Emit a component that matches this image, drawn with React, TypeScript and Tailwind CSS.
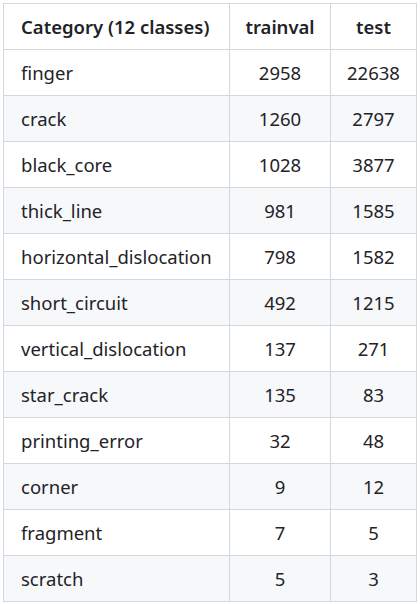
import React from "react";

const rows: [string, string, string][] = [
  ["finger", "2958", "22638"],
  ["crack", "1260", "2797"],
  ["black_core", "1028", "3877"],
  ["thick_line", "981", "1585"],
  ["horizontal_dislocation", "798", "1582"],
  ["short_circuit", "492", "1215"],
  ["vertical_dislocation", "137", "271"],
  ["star_crack", "135", "83"],
  ["printing_error", "32", "48"],
  ["corner", "9", "12"],
  ["fragment", "7", "5"],
  ["scratch", "5", "3"],
];

export default function App() {
  return (
    <div className="w-[420px] h-[604px] bg-white pt-[3px] pl-[3px]" style={{ fontFamily: '"Noto Sans", sans-serif' }}>
      <table className="border-collapse text-[18.5px] text-[#1f2328]">
        <colgroup>
          <col className="w-[226px]" />
          <col className="w-[101px]" />
          <col className="w-[86px]" />
        </colgroup>
        <thead>
          <tr className="bg-white h-[46px]">
            <th className="border border-[#d1d9e0] pl-[17px] pr-[4px] text-left font-semibold">Category (12 classes)</th>
            <th className="border border-[#d1d9e0] px-[4px] text-center font-semibold">trainval</th>
            <th className="border border-[#d1d9e0] px-[4px] text-center font-semibold">test</th>
          </tr>
        </thead>
        <tbody>
          {rows.map((r, i) => (
            <tr key={r[0]} className={`h-[46px] ${i % 2 === 1 ? "bg-[#f6f8fa]" : "bg-white"}`}>
              <td className="border border-[#d1d9e0] pl-[17px] pr-[4px] text-left">{r[0]}</td>
              <td className="border border-[#d1d9e0] px-[4px] text-center">{r[1]}</td>
              <td className="border border-[#d1d9e0] px-[4px] text-center">{r[2]}</td>
            </tr>
          ))}
        </tbody>
      </table>
    </div>
  );
}
